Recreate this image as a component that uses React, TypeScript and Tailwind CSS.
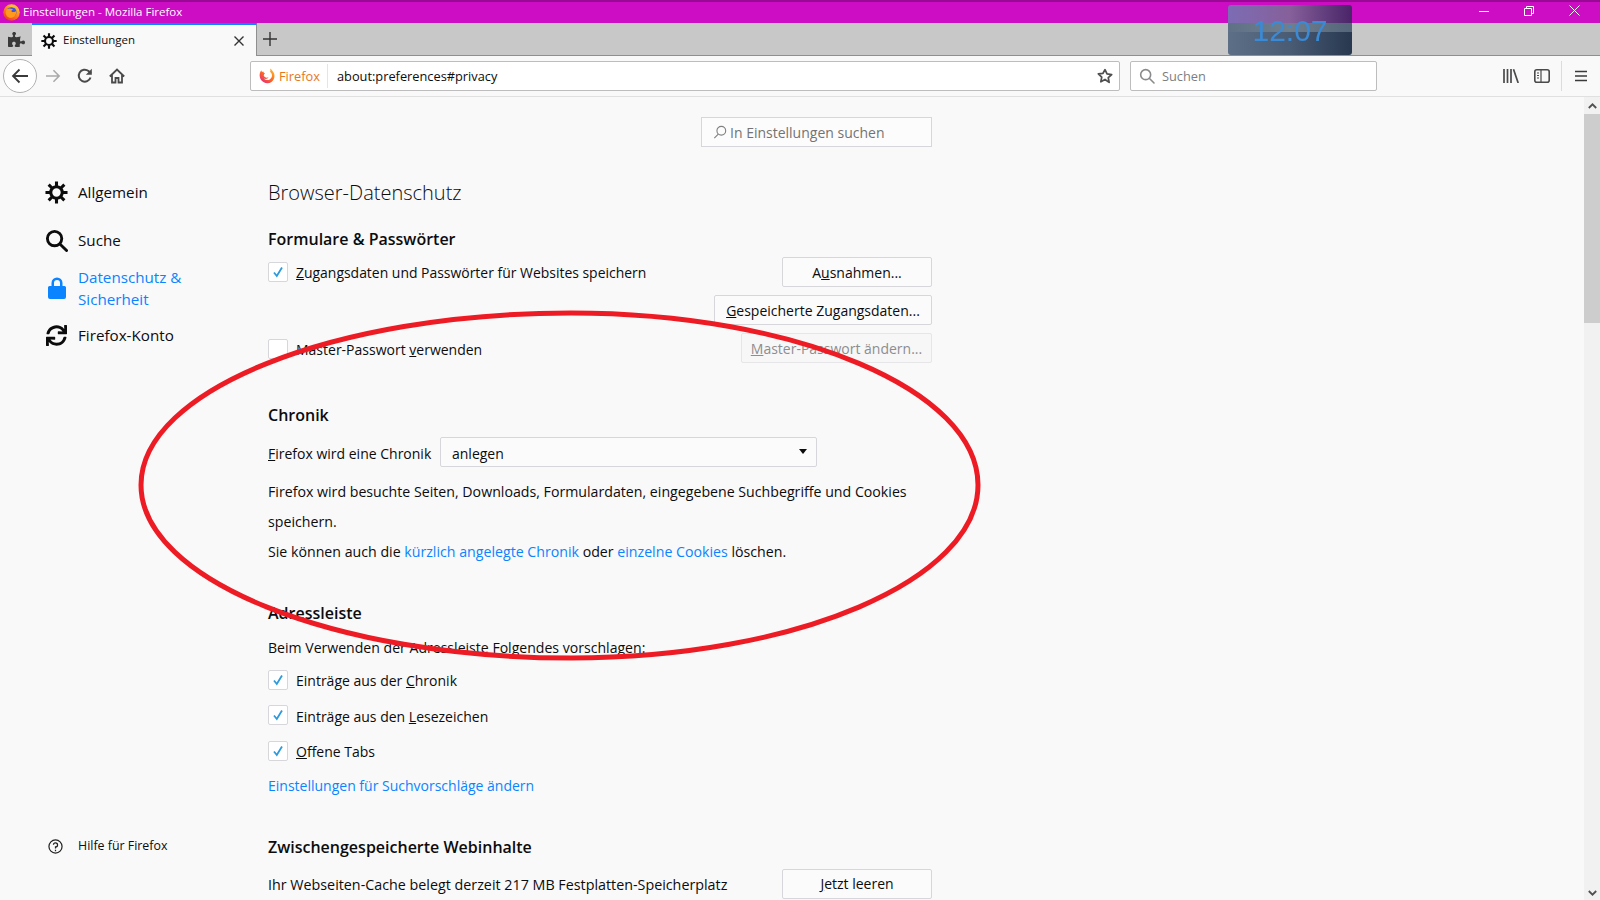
import React from "react";
import { FaPuzzlePiece, FaSync } from "react-icons/fa";

const font = "font-['Open_Sans','Noto_Sans',sans-serif]";

// window icon, the full colour one
const FirefoxLogo = ({ size = 16 }: { size?: number }) => (
  <svg width={size} height={size} viewBox="0 0 32 32">
    <defs>
      <linearGradient id="fxOuter" x1="0.8" y1="0" x2="0.2" y2="1">
        <stop offset="0" stopColor="#ffd02e" />
        <stop offset="0.55" stopColor="#ff7a1a" />
        <stop offset="1" stopColor="#e8322c" />
      </linearGradient>
    </defs>
    <circle cx="16" cy="16" r="15.500" fill="url(#fxOuter)" />
    <circle cx="16" cy="15" r="9.500" fill="#3f58d8" />
    <path d="M7 10C11 7 18 8 20 12C17 10 14 13 17 15C21 16 24 14 25 12C26 20 21 26 14 26C9 26 5 21 5 16C5 14 6 12 7 10Z" fill="#ff9a1f" />
    <path d="M16 1C13 3 12 5 12 7C16 6 19 6 22 8C21 5 19 2 16 1Z" fill="#ffc22e" />
  </svg>
);

// address bar identity icon, crescent with a white middle
const FirefoxCrescent = ({ size = 16 }: { size?: number }) => (
  <svg width={size} height={size} viewBox="0 0 32 32">
    <defs>
      <linearGradient id="fxCres" x1="0.9" y1="0" x2="0.1" y2="1">
        <stop offset="0" stopColor="#ffc02a" />
        <stop offset="0.5" stopColor="#ff6a1f" />
        <stop offset="1" stopColor="#e0248a" />
      </linearGradient>
    </defs>
    <path
      d="M22 1C23 4 23 6 22 8C26 10 27 15 25 19C22 25 14 26 10 21C13 23 18 22 19 18C17 20 12 20 10 16C9 14 10 12 12 11C10 10 9 9 9 7C6 9 4 6 5 4C1 9 0 16 3 22C7 30 18 33 25 28C32 23 33 12 27 6C26 4 24 2 22 1Z"
      fill="url(#fxCres)"
    />
  </svg>
);

const GearIcon = ({ size }: { size: number }) => (
  <svg width={size} height={size} viewBox="0 0 24 24" fill="none" stroke="currentColor">
    <circle cx="12" cy="12" r="6" strokeWidth="3.2" />
    <path d="M12 0.500v5M12 18.500v5M0.500 12h5M18.500 12h5M3.800 3.800l3.800 3.800M16.400 16.400l3.800 3.800M3.800 20.200l3.800-3.800M16.400 7.600l3.800-3.800" strokeWidth="3.200" />
  </svg>
);

const SearchIcon = ({ size, width = 3 }: { size: number; width?: number }) => (
  <svg width={size} height={size} viewBox="0 0 24 24" fill="none" stroke="currentColor" strokeWidth={width} strokeLinecap="round">
    <circle cx="10" cy="10" r="7.500" />
    <path d="M15.800 15.800 22.500 22.500" />
  </svg>
);

const CheckBox = ({ checked = false }: { checked?: boolean }) => (
  <span className="w-5 h-5 shrink-0 bg-white border border-[#d7d7db] rounded-[2px] flex items-center justify-center">
    {checked && (
      <svg width="12" height="12" viewBox="0 0 12 12" fill="none" stroke="#2b9ade" strokeWidth="1.800">
        <path d="M2 6.500 4.800 10 10 1.500" />
      </svg>
    )}
  </span>
);

const Btn = ({ children, disabled = false, w }: { children: React.ReactNode; disabled?: boolean; w: string }) => (
  <div
    className={`${w} h-[30px] shrink-0 flex items-center justify-center border rounded-[2px] text-[14px] ${
      disabled ? "border-[#e6e6e8] bg-[#f7f7f7] text-[#8d8d90]" : "border-[#d7d7db] bg-[#fbfbfb] text-[#0c0c0d]"
    }`}
  >
    <span>{children}</span>
  </div>
);

const CheckRow = ({ children }: { children: React.ReactNode }) => (
  <div className="h-[35.500px] flex items-center gap-2">
    <CheckBox checked />
    <span className="translate-y-px">{children}</span>
  </div>
);

const H2 = ({ children, className }: { children: React.ReactNode; className: string }) => (
  <h2 className={`text-[16px] leading-6 font-semibold text-[#0c0c0d] ${className}`}>{children}</h2>
);

const Link = ({ children }: { children: React.ReactNode }) => <span className="text-[#0a84ff]">{children}</span>;

const TitleBar = () => (
  <div className="h-[23px] shrink-0 bg-[#cc0dc4] border-t-2 border-[#990a94] flex items-center text-white text-[11.500px] pl-[3px]">
    <FirefoxLogo size={17} />
    <span className="ml-[3px] -translate-y-px">Einstellungen - Mozilla Firefox</span>
    <div className="ml-auto flex items-center gap-[35px] pr-[20px] -translate-y-[2px]">
      <svg width="10" height="10" viewBox="0 0 10 10" stroke="white" fill="none"><path d="M0 5.500h10" /></svg>
      <svg width="10" height="10" viewBox="0 0 10 10" stroke="white" fill="none"><path d="M.5 2.500h7v7h-7zM2.500 2.500v-2h7v7h-2" /></svg>
      <svg width="11" height="11" viewBox="0 0 11 11" stroke="white" fill="none"><path d="M.5.5l10 10M10.500.5l-10 10" /></svg>
    </div>
  </div>
);

const TabStrip = () => (
  <div className="h-[33px] shrink-0 bg-[#c8c8c8] border-b border-[#8f8f8f] flex items-stretch">
    <div className="w-[32px] flex items-center justify-center text-[#3a3a3a]">
      <FaPuzzlePiece size={17} />
    </div>
    <div className="w-[225px] -mb-px bg-[#f9f9fa] border-t-2 border-[#0a84ff] border-r border-r-[#8f8f8f] flex items-center pl-[9px] pr-[12px] text-[11.500px] text-[#0c0c0d]">
      <GearIcon size={16} />
      <span className="ml-[6px] -translate-y-px">Einstellungen</span>
      <svg className="ml-auto" width="10" height="10" viewBox="0 0 10 10" stroke="#333" strokeWidth="1.400" fill="none"><path d="M.5.5l9 9M9.500.5l-9 9" /></svg>
    </div>
    <div className="w-[26px] flex items-center justify-center">
      <svg width="14" height="14" viewBox="0 0 14 14" stroke="#333" strokeWidth="1.400" fill="none"><path d="M7 0v14M0 7h14" /></svg>
    </div>
  </div>
);

const NavBar = () => (
  <div className="h-[41px] shrink-0 bg-[#f9f9fa] border-b border-[#e0e0e1] flex items-center pl-[3px] pr-[13px] text-[12.800px]">
    <div className="w-[34px] h-[34px] rounded-full bg-white border border-[#b1b1b3] flex items-center justify-center">
      <svg width="18" height="16" viewBox="0 0 18 16" fill="none" stroke="#3a3a3b" strokeWidth="1.800"><path d="M17 8H2M8.500 1.500 2 8l6.500 6.500" /></svg>
    </div>
    <svg className="ml-[8px]" width="16" height="14" viewBox="0 0 18 16" fill="none" stroke="#a9a9aa" strokeWidth="1.800"><path d="M1 8h15M9.500 1.500 16 8l-6.500 6.500" /></svg>
    <svg className="ml-[16px]" width="16" height="16" viewBox="0 0 16 16" fill="none" stroke="#4a4a4b" strokeWidth="2"><path d="M13.500 9.500A6 6 0 1 1 11.500 3L14 5" /><path d="M14.800.8v6h-6z" fill="#4a4a4b" stroke="none" /></svg>
    <svg className="ml-[16px]" width="16" height="16" viewBox="0 0 16 16" fill="none" stroke="#4a4a4b" strokeWidth="1.800"><path d="M.8 8.500 8 1.500l7.200 7M3 7v7.500h3.500V10h3v4.500H13V7" /></svg>
    <div className="ml-[125px] w-[870px] h-[30px] bg-white border border-[#bdbdbd] rounded-[2px] flex items-center pl-[8px] pr-[6px] text-[#0c0c0d]">
      <FirefoxCrescent size={16} />
      <span className="ml-[4px] text-[#e8761c] pr-[7px] border-r border-[#e5e5e5] h-[24px] flex items-center">
        <span className="translate-y-px">Firefox</span>
      </span>
      <span className="ml-[9px] translate-y-px">about:preferences#privacy</span>
      <svg className="ml-auto" width="16" height="16" viewBox="0 0 24 24" fill="none" stroke="#4f4f50" strokeWidth="2.600" strokeLinejoin="round"><path d="M12 2.500l3 6.400 7 .9-5.100 4.800 1.300 7L12 17.200l-6.200 3.400 1.300-7L2 8.800l7-.9z" /></svg>
    </div>
    <div className="ml-[10px] w-[247px] h-[30px] bg-white border border-[#bdbdbd] rounded-[2px] flex items-center pl-[8px] text-[#7d7d7f]">
      <span className="text-[#8a8a8c]"><SearchIcon size={16} width={2.400} /></span>
      <span className="ml-[7px] translate-y-px">Suchen</span>
    </div>
    <svg className="ml-auto" width="16" height="14" viewBox="0 0 16 14" fill="none" stroke="#4a4a4b" strokeWidth="1.700"><path d="M1 0v14M4.500 0v14M8 0v14M10.500.3 15.200 14" /></svg>
    <svg className="ml-[15px]" width="16" height="14" viewBox="0 0 16 14" fill="none" stroke="#4a4a4b" strokeWidth="1.600"><rect x=".8" y=".8" width="14.400" height="12.400" rx="2" /><path d="M7 1v12M3 4h2M3 6.500h2M3 9h2" strokeWidth="1.200" /></svg>
    <div className="ml-[11px] h-[30px] w-px bg-[#dcdcdd]" />
    <svg className="ml-[13px]" width="12" height="12" viewBox="0 0 12 12" stroke="#3a3a3b" strokeWidth="1.700"><path d="M0 1.500h12M0 6h12M0 10.500h12" /></svg>
  </div>
);

const Sidebar = () => (
  <aside className="w-[268px] shrink-0 relative text-[15.200px] text-[#0c0c0d]">
    <div className="pt-[80px] pl-[45px] flex flex-col">
      <div className="h-[30px] flex items-center gap-[10px]">
        <span className="w-[23px] flex justify-center"><GearIcon size={23} /></span>
        Allgemein
      </div>
      <div className="mt-[18px] h-[30px] flex items-center gap-[10px]">
        <span className="w-[23px] flex justify-center"><SearchIcon size={23} /></span>
        Suche
      </div>
      <div className="mt-[11px] flex items-center gap-[10px] text-[#0a84ff] leading-[22px]">
        <span className="w-[23px] flex justify-center">
          <svg width="18" height="22" viewBox="0 0 18 22" fill="#0a84ff"><path d="M1.500 9H3.500V6a5.500 5.500 0 0 1 11 0v3h2a1.500 1.500 0 0 1 1.500 1.500V20a2 2 0 0 1-2 2H2a2 2 0 0 1-2-2v-9.500A1.500 1.500 0 0 1 1.500 9zM6 9h6V6a3 3 0 0 0-6 0z" /></svg>
        </span>
        <span>Datenschutz &amp;<br />Sicherheit</span>
      </div>
      <div className="mt-[10px] h-[30px] flex items-center gap-[10px]">
        <span className="w-[23px] flex justify-center"><FaSync size={21} /></span>
        Firefox-Konto
      </div>
    </div>
    <div className="absolute left-[48px] top-[740px] flex items-center gap-[15px] text-[12.400px]">
      <svg width="15" height="15" viewBox="0 0 16 16" fill="none" stroke="#222" strokeWidth="1.300"><circle cx="8" cy="8" r="7" /><path d="M5.800 6.200A2.200 2.200 0 1 1 8 8.500V10M8 11.500v1.500" /></svg>
      Hilfe für Firefox
    </div>
  </aside>
);

const Main = () => (
  <main className="w-[664px] shrink-0 text-[14px] text-[#0c0c0d]">
    <div className="mt-[20px] ml-[433px] w-[231px] h-[30px] bg-[#fcfcfc] border border-[#d7d7db] flex items-center pl-[11px] text-[#737373]">
      <svg width="14" height="14" viewBox="0 0 16 16" fill="none" stroke="#808082" strokeWidth="1.300"><circle cx="9.500" cy="6.500" r="5" /><path d="M6 10.500 1.500 15" /></svg>
      <span className="ml-[3px]">In Einstellungen suchen</span>
    </div>

    <h1 className="mt-[31px] text-[20px] leading-[30px] font-light text-[#0c0c0d]">Browser-Datenschutz</h1>

    <H2 className="mt-[19px]">Formulare &amp; Passwörter</H2>
    <div className="mt-[6px] h-[30px] flex items-center justify-between">
      <div className="flex items-center gap-2">
        <CheckBox checked />
        <span className="translate-y-px text-[13.950px]"><u>Z</u>ugangsdaten und Passwörter für Websites speichern</span>
      </div>
      <Btn w="w-[150px]">A<u>u</u>snahmen...</Btn>
    </div>
    <div className="mt-[8px] flex justify-end">
      <Btn w="w-[218px]"><u>G</u>espeicherte Zugangsdaten...</Btn>
    </div>
    <div className="mt-[8px] h-[30px] flex items-center justify-between">
      <div className="flex items-center gap-2 mt-[2px]">
        <CheckBox />
        <span>Master-Passwort <u>v</u>erwenden</span>
      </div>
      <Btn w="w-[191px]" disabled><u>M</u>aster-Passwort ändern...</Btn>
    </div>

    <H2 className="mt-[40px]">Chronik</H2>
    <div className="mt-[10px] h-[30px] flex items-center">
      <span className="w-[172px] translate-y-px"><u>F</u>irefox wird eine Chronik</span>
      <div className="w-[377px] h-[30px] bg-[#fbfbfb] border border-[#d7d7db] rounded-[2px] flex items-center pl-[11px] pr-[9px]">
        <span className="translate-y-px">anlegen</span>
        <span className="ml-auto mb-[2px] border-x-[4px] border-x-transparent border-t-[5px] border-t-[#0c0c0d]" />
      </div>
    </div>
    <p className="mt-[9px] leading-[30px] translate-y-px text-[14.180px]">
      Firefox wird besuchte Seiten, Downloads, Formulardaten, eingegebene Suchbegriffe und Cookies speichern.
    </p>
    <p className="leading-[30px] translate-y-px text-[14.180px]">
      Sie können auch die <Link>kürzlich angelegte Chronik</Link> oder <Link>einzelne Cookies</Link> löschen.
    </p>

    <H2 className="mt-[35px]">Adressleiste</H2>
    <p className="mt-[10px] leading-[24px] translate-y-px text-[14.080px]">Beim Verwenden der Adressleiste Folgendes vorschlagen:</p>
    <div className="mt-[3px]">
      <CheckRow>Einträge aus der <u>C</u>hronik</CheckRow>
      <CheckRow>Einträge aus den <u>L</u>esezeichen</CheckRow>
      <CheckRow><u>O</u>ffene Tabs</CheckRow>
    </div>
    <p className="mt-[5px] leading-[24px]"><Link>Einstellungen für Suchvorschläge ändern</Link></p>

    <H2 className="mt-[37px]">Zwischengespeicherte Webinhalte</H2>
    <div className="mt-[10px] h-[30px] flex items-center justify-between">
      <span className="translate-y-px text-[14.300px]">Ihr Webseiten-Cache belegt derzeit 217 MB Festplatten-Speicherplatz</span>
      <Btn w="w-[150px]"><u>J</u>etzt leeren</Btn>
    </div>
  </main>
);

const Scrollbar = () => (
  <div className="w-4 h-full ml-auto bg-[#f1f1f1] flex flex-col items-center relative">
    <svg className="mt-[6px]" width="9" height="6" viewBox="0 0 9 6" fill="none" stroke="#505050" strokeWidth="1.800"><path d="M.8 5 4.500 1.300 8.200 5" /></svg>
    <div className="mt-[5px] w-4 h-[209px] bg-[#cdcdcd]" />
    <svg className="absolute bottom-[4px]" width="9" height="6" viewBox="0 0 9 6" fill="none" stroke="#505050" strokeWidth="1.800"><path d="M.8 1 4.500 4.700 8.200 1" /></svg>
  </div>
);

const App = () => (
  <div className={`${font} w-[1600px] h-[900px] relative overflow-hidden flex flex-col bg-[#f9f9fa]`}>
    <TitleBar />
    <TabStrip />
    <NavBar />
    <div className="flex-1 flex min-h-0 overflow-hidden">
      <Sidebar />
      <Main />
      <Scrollbar />
    </div>

    {/* clock gadget sits over the window, magenta shows through its top part */}
    <div className="absolute left-[1228px] top-[5px] w-[124px] h-[50px] rounded-[3px] overflow-hidden flex flex-col">
      <div className="h-[18px] bg-gradient-to-r from-[#7c6cb4] via-[#86609a] to-[#4a2468]" />
      <div className="h-[9px] bg-gradient-to-r from-[#5f7186] via-[#6f7f8e] to-[#55657a]" />
      <div className="flex-1 bg-gradient-to-r from-[#5c6f86] via-[#4a5c74] to-[#27384f]" />
      <span className="absolute inset-0 flex items-center justify-center font-['Liberation_Sans',sans-serif] text-[30px] text-[#3a8ad6] blur-[0.5px]">12:07</span>
    </div>

    {/* hand drawn red marker */}
    <svg className="absolute left-0 top-0 pointer-events-none" width="1600" height="900">
      <path
        d="M141 485C141 390 334 313 571 313C796 313 978 390 978 485C978 580 796 658 571 658C334 658 141 580 141 485Z"
        fill="none"
        stroke="#ed1c24"
        strokeWidth="5"
      />
    </svg>
  </div>
);

export default App;
